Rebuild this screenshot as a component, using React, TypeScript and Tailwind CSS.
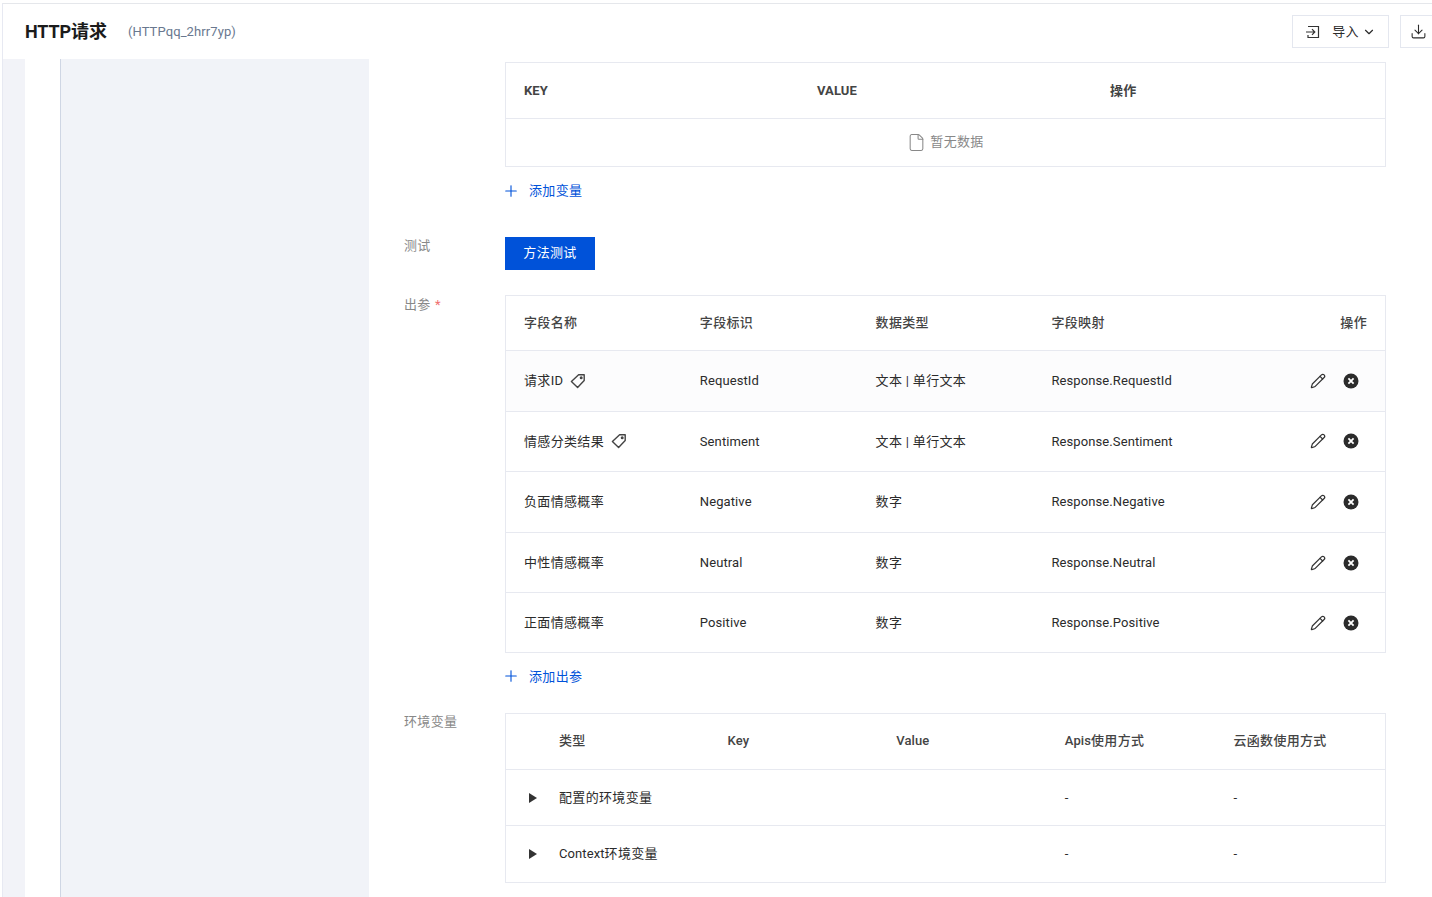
import React from "react";
import { ChevronDown, Download, File, Pencil, Plus } from "lucide-react";

const FONT = "[font-family:Roboto,'Noto_Sans_CJK_SC',sans-serif]";

// the CJK glyphs in the reference run a bit wider than Noto's at 13px
const Zh = ({ children }: { children: React.ReactNode }) => (
  <span className="tracking-[0.33px]">{children}</span>
);

const ImportIcon = () => (
  <svg width="16" height="16" viewBox="0 0 16 16" fill="none" stroke="#333" strokeWidth="1.2">
    <path d="M3 2.5h10.5v11H3V11" />
    <path d="M1 8h8.5M7 5.2 9.8 8 7 10.8" />
  </svg>
);

const TagIcon = () => (
  <svg width="16" height="16" viewBox="0 0 16 16" fill="none" stroke="#444" strokeWidth="1.4" strokeLinejoin="round">
    <path d="M8.6 1.8h5.6v5.6L7.6 14.4 1.4 8.4z" />
    <circle cx="11.2" cy="4.8" r="0.8" />
  </svg>
);

const RemoveIcon = () => (
  <svg width="16" height="16" viewBox="0 0 16 16">
    <circle cx="8" cy="8" r="7.5" fill="#2b2b2b" />
    <path d="M5.4 5.4l5.2 5.2M10.6 5.4l-5.2 5.2" stroke="#fff" strokeWidth="1.8" />
  </svg>
);

const Caret = () => (
  <svg width="8" height="10" viewBox="0 0 8 10">
    <path d="M0 0l8 5-8 5z" fill="#333" />
  </svg>
);

const AddLink = ({ text }: { text: string }) => (
  <div className="flex h-[20px] items-center text-[13px] text-[#0052d9]">
    <Plus className="-ml-[3px] mr-[9px] h-[18px] w-[18px]" strokeWidth={1.5} />
    <Zh>{text}</Zh>
  </div>
);

const outputs = [
  { name: "请求ID", tag: true, id: "RequestId", type: "文本 | 单行文本", map: "Response.RequestId", tint: true },
  { name: "情感分类结果", tag: true, id: "Sentiment", type: "文本 | 单行文本", map: "Response.Sentiment" },
  { name: "负面情感概率", id: "Negative", type: "数字", map: "Response.Negative" },
  { name: "中性情感概率", id: "Neutral", type: "数字", map: "Response.Neutral" },
  { name: "正面情感概率", id: "Positive", type: "数字", map: "Response.Positive" },
];

const App = () => {
  return (
    <div className={`${FONT} h-[897px] w-[1432px] overflow-hidden bg-white pt-[3px] text-[13px] tracking-[0.1px] text-[#2b2b2b]`}>
      <div className="ml-[2px] flex h-[894px] flex-col border-l border-t border-l-[#e7e9f2] border-t-[#e5e7eb]">
        {/* Header */}
        <div className="flex h-[55px] shrink-0 items-center pl-[22px]">
          <h1 className="text-[18px] font-bold tracking-[-0.1px] text-[#1b1b1b]">HTTP请求</h1>
          <span className="ml-[21px] text-[13px] text-[#69788f]">(HTTPqq_2hrr7yp)</span>
          <div className="-mr-[8px] ml-auto flex gap-[11px]">
            <button className="flex h-[33px] w-[97px] items-center justify-center border border-[#e4e7ef] text-[13px]">
              <ImportIcon />
              <span className="ml-[11px]">
                <Zh>导入</Zh>
              </span>
              <ChevronDown className="ml-[3px] h-[14px] w-[14px]" />
            </button>
            <button className="flex h-[33px] w-[40px] items-center border border-[#e4e7ef] pl-[9px]">
              <Download className="h-[17px] w-[17px]" strokeWidth={1.5} />
            </button>
          </div>
        </div>

        <div className="flex min-h-0 flex-1">
          {/* Left rails */}
          <div className="w-[22px] shrink-0 bg-[#f2f3f8]" />
          <div className="w-[36px] shrink-0 border-r border-r-[#cfd6e4]" />
          <div className="w-[308px] shrink-0 bg-[#f1f3f8]" />

          {/* Form */}
          <div className="flex-1 pl-[35px] pt-[3px]">
            <div className="ml-[101px] w-[881px] border border-[#e7e9f0]">
              <div className="grid h-[56px] grid-cols-3 items-center border-b border-[#e7e9f0] font-bold text-[#444]">
                <span className="pl-[18px]">KEY</span>
                <span className="pl-[18px]">VALUE</span>
                <span className="pl-[18px]">
                  <Zh>操作</Zh>
                </span>
              </div>
              <div className="flex h-[47px] items-center justify-center pb-[1px] text-[#888]">
                <File className="mr-[4px] h-[19px] w-[19px] text-[#888]" strokeWidth={1.3} />
                <Zh>暂无数据</Zh>
              </div>
            </div>

            <div className="ml-[101px] mt-[14px]">
              <AddLink text="添加变量" />
            </div>

            <div className="mt-[36px] flex">
              <span className="-mt-[1px] w-[101px] text-[#888]">
                <Zh>测试</Zh>
              </span>
              <button className="h-[33px] w-[90px] bg-[#0052d9] pb-[1px] text-[13px] text-white">
                <Zh>方法测试</Zh>
              </button>
            </div>

            <div className="mt-[25px] flex">
              <span className="w-[101px] text-[#888]">
                <Zh>出参</Zh> <span className="ml-[1px] text-[#f07070]">*</span>
              </span>
              <div className="w-[881px] border border-[#e7e9f0]">
                <div className="grid h-[55px] grid-cols-5 items-center border-b border-[#e7e9f0] font-medium text-[#444]">
                  <span className="pl-[18px]"><Zh>字段名称</Zh></span>
                  <span className="pl-[18px]"><Zh>字段标识</Zh></span>
                  <span className="pl-[18px]"><Zh>数据类型</Zh></span>
                  <span className="pl-[18px]"><Zh>字段映射</Zh></span>
                  <span className="pr-[18px] text-right"><Zh>操作</Zh></span>
                </div>
                {outputs.map((row) => (
                  <div
                    key={row.id}
                    className={`grid h-[60.6px] grid-cols-5 items-center border-b border-[#e7e9f0] last:h-[59px] last:border-b-0 ${row.tint ? "bg-[#fcfcfd]" : ""}`}
                  >
                    <span className="flex items-center pl-[18px]">
                      <Zh>{row.name}</Zh>
                      {row.tag && (
                        <span className="ml-[7px]">
                          <TagIcon />
                        </span>
                      )}
                    </span>
                    <span className="pl-[18px]">{row.id}</span>
                    <span className="pl-[18px]"><Zh>{row.type}</Zh></span>
                    <span className="pl-[18px]">{row.map}</span>
                    <span className="flex items-center justify-end gap-[17px] pr-[26px]">
                      <Pencil className="h-[16px] w-[16px] text-[#333]" strokeWidth={1.8} />
                      <RemoveIcon />
                    </span>
                  </div>
                ))}
              </div>
            </div>

            <div className="ml-[101px] mt-[13px]">
              <AddLink text="添加出参" />
            </div>

            <div className="mt-[27px] flex">
              <span className="-mt-[1px] w-[101px] text-[#888]">
                <Zh>环境变量</Zh>
              </span>
              <div className="w-[881px] border border-[#e7e9f0]">
                <div className="flex h-[56px] items-center border-b border-[#e7e9f0] pb-[2px] font-medium text-[#444]">
                  <span className="w-[36px] shrink-0" />
                  <div className="grid flex-1 grid-cols-5">
                    <span className="pl-[17px]"><Zh>类型</Zh></span>
                    <span className="pl-[17px]">Key</span>
                    <span className="pl-[17px]">Value</span>
                    <span className="pl-[17px]">Apis<Zh>使用方式</Zh></span>
                    <span className="pl-[17px]"><Zh>云函数使用方式</Zh></span>
                  </div>
                </div>
                <div className="flex h-[56px] items-center border-b border-[#e7e9f0]">
                  <span className="flex w-[36px] shrink-0 pl-[23px]">
                    <Caret />
                  </span>
                  <div className="grid flex-1 grid-cols-5">
                    <span className="pl-[17px]"><Zh>配置的环境变量</Zh></span>
                    <span />
                    <span />
                    <span className="pl-[17px]">-</span>
                    <span className="pl-[17px]">-</span>
                  </div>
                </div>
                <div className="flex h-[56px] items-center">
                  <span className="flex w-[36px] shrink-0 pl-[23px]">
                    <Caret />
                  </span>
                  <div className="grid flex-1 grid-cols-5 pb-[1px]">
                    <span className="pl-[17px]">Context<Zh>环境变量</Zh></span>
                    <span />
                    <span />
                    <span className="pl-[17px]">-</span>
                    <span className="pl-[17px]">-</span>
                  </div>
                </div>
              </div>
            </div>
          </div>
        </div>
      </div>
    </div>
  );
};

export default App;
